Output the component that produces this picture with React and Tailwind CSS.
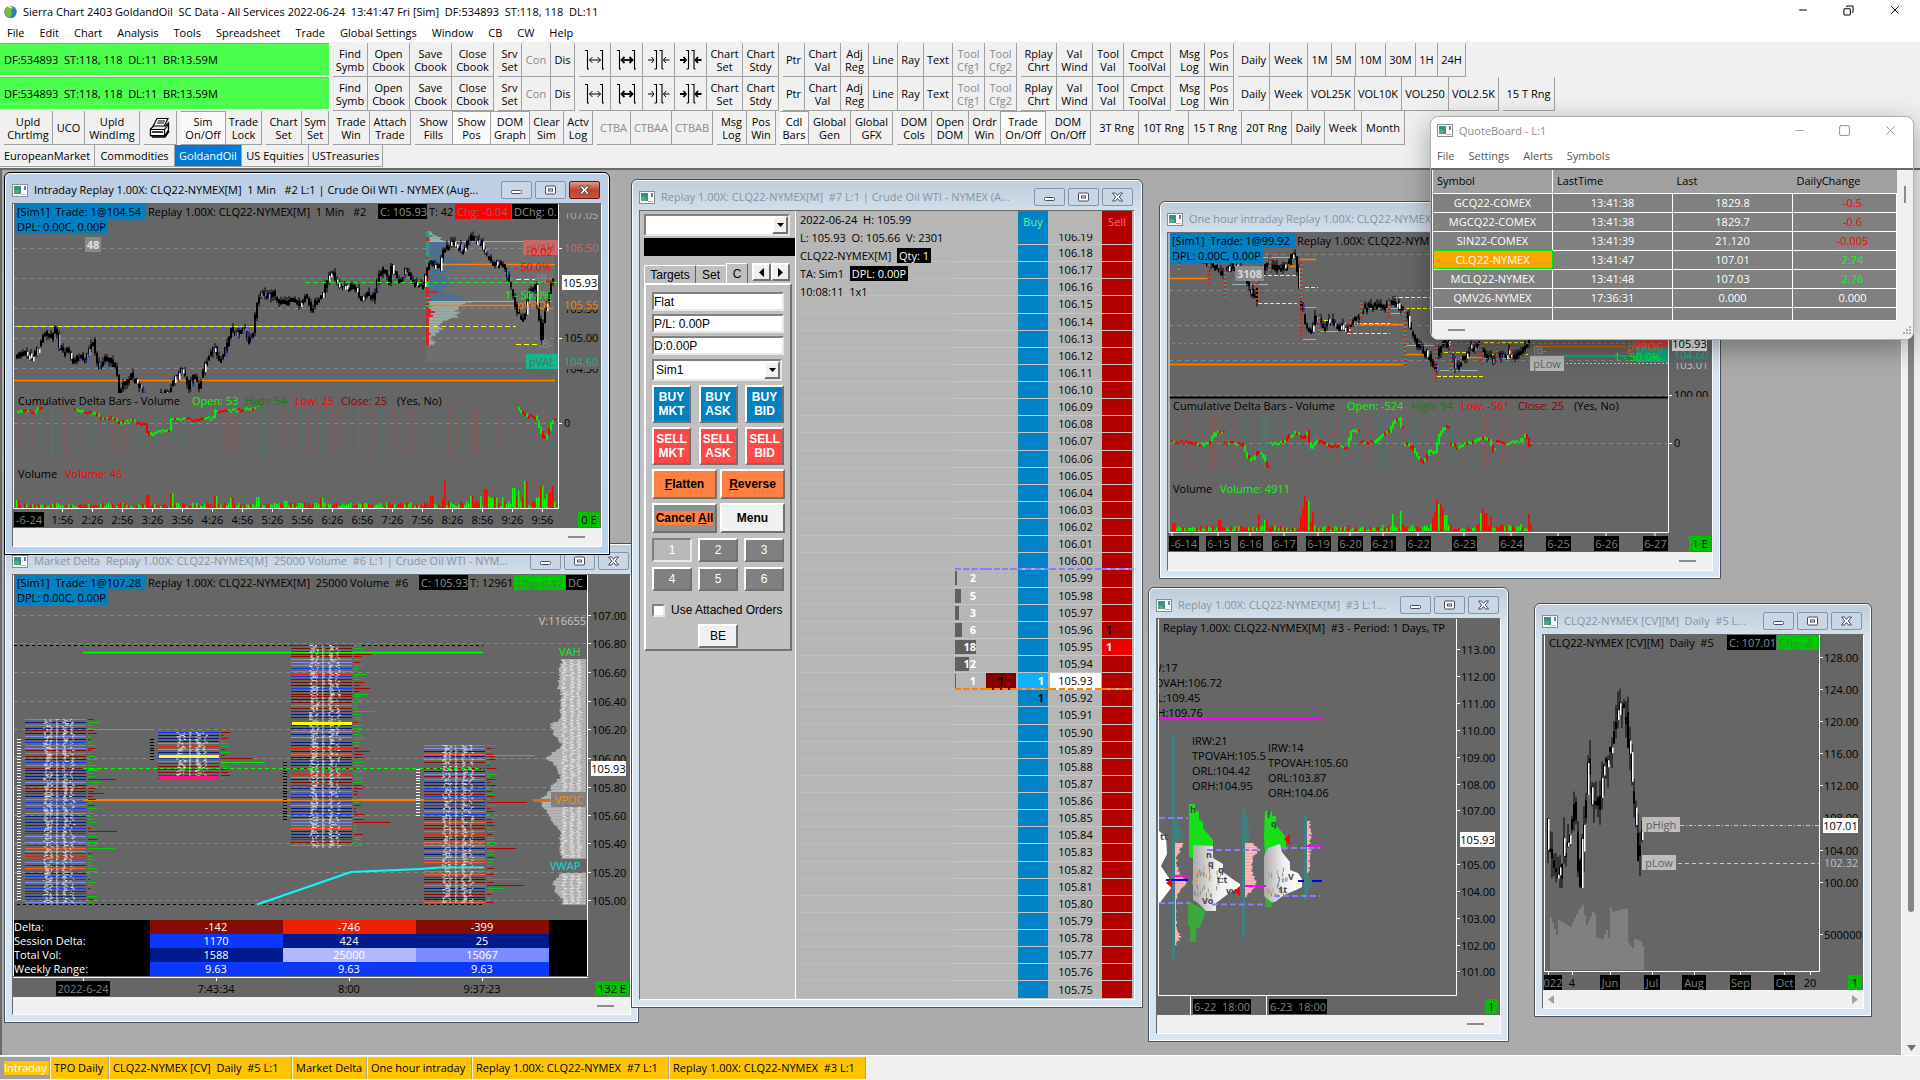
import { Minus, X, Square, Copy } from 'lucide-react';
import clsx from 'clsx';

// ---------- helpers ----------

const makeRandom = (seed) => {
  let s = seed;
  return () => {
    s = (s * 1664525 + 1013904223) % 4294967296;
    return s / 4294967296;
  };
};

const valueAt = (points, x) => {
  for (let i = 1; i < points.length; i++) {
    const [x0, y0] = points[i - 1];
    const [x1, y1] = points[i];
    if (x <= x1) return y0 + ((y1 - y0) * (x - x0)) / (x1 - x0 || 1);
  }
  return points[points.length - 1][1];
};

const range = (from, to, step) => {
  const out = [];
  for (let v = from; v <= to; v += step) out.push(v);
  return out;
};

// ---------- toolbar data: [label, width, state] ----------

const fileGroup = [
  ['Find\nSymb', 'w-[35px]'],
  ['Open\nCbook', 'w-[42px]'],
  ['Save\nCbook', 'w-[42px]'],
  ['Close\nCbook', 'w-[42px]'],
];
const serverGroup = [
  ['Srv\nSet', 'w-[24px]'],
  ['Con', 'w-[29px]', 'off'],
  ['Dis', 'w-[24px]'],
];
const spacingGroup = [
  ['widen', 'w-[32px]', 'icon'],
  ['widenBold', 'w-[32px]', 'icon'],
  ['narrow', 'w-[32px]', 'icon'],
  ['narrowBold', 'w-[32px]', 'icon'],
  ['Chart\nSet', 'w-[36px]'],
  ['Chart\nStdy', 'w-[36px]'],
];
const toolGroup = [
  ['Ptr', 'w-[22px]'],
  ['Chart\nVal', 'w-[36px]'],
  ['Adj\nReg', 'w-[28px]'],
  ['Line', 'w-[29px]'],
  ['Ray', 'w-[26px]'],
  ['Text', 'w-[29px]'],
  ['Tool\nCfg1', 'w-[32px]', 'off'],
  ['Tool\nCfg2', 'w-[32px]', 'off'],
];
const replayGroup = [
  ['Rplay\nChrt', 'w-[36px]'],
  ['Val\nWind', 'w-[36px]'],
  ['Tool\nVal', 'w-[31px]'],
  ['Cmpct\nToolVal', 'w-[47px]'],
];
const logGroup = [
  ['Msg\nLog', 'w-[30px]'],
  ['Pos\nWin', 'w-[29px]'],
];

const common = [fileGroup, serverGroup, spacingGroup, toolGroup, replayGroup, logGroup];

const rowOne = [
  ...common,
  [
    ['Daily', 'w-[32px]'],
    ['Week', 'w-[38px]'],
    ['1M', 'w-[24px]'],
    ['5M', 'w-[24px]'],
    ['10M', 'w-[30px]'],
    ['30M', 'w-[30px]'],
    ['1H', 'w-[22px]'],
    ['24H', 'w-[28px]'],
  ],
];

const rowTwo = [
  ...common,
  [
    ['Daily', 'w-[32px]'],
    ['Week', 'w-[38px]'],
    ['VOL25K', 'w-[47px]'],
    ['VOL10K', 'w-[47px]'],
    ['VOL250', 'w-[47px]'],
    ['VOL2.5K', 'w-[50px]'],
  ],
  [['15 T Rng', 'w-[52px]']],
];

const rowThree = [
  [
    ['Upld\nChrtImg', 'w-[49px]'],
    ['UCO', 'w-[32px]'],
    ['Upld\nWindImg', 'w-[55px]'],
  ],
  [['print', 'w-[33px]', 'icon']],
  [
    ['Sim\nOn/Off', 'w-[45px]', 'on'],
    ['Trade\nLock', 'w-[36px]'],
  ],
  [
    ['Chart\nSet', 'w-[36px]'],
    ['Sym\nSet', 'w-[27px]'],
  ],
  [
    ['Trade\nWin', 'w-[37px]'],
    ['Attach\nTrade', 'w-[41px]'],
  ],
  [
    ['Show\nFills', 'w-[38px]'],
    ['Show\nPos', 'w-[38px]', 'on'],
    ['DOM\nGraph', 'w-[39px]', 'on'],
    ['Clear\nSim', 'w-[34px]'],
    ['Actv\nLog', 'w-[29px]'],
  ],
  [
    ['CTBA', 'w-[34px]', 'off'],
    ['CTBAA', 'w-[41px]', 'off'],
    ['CTBAB', 'w-[41px]', 'off'],
  ],
  [
    ['Msg\nLog', 'w-[30px]'],
    ['Pos\nWin', 'w-[29px]'],
  ],
  [
    ['Cdl\nBars', 'w-[29px]', 'on'],
    ['Global\nGen', 'w-[42px]'],
    ['Global\nGFX', 'w-[42px]'],
  ],
  [
    ['DOM\nCols', 'w-[35px]'],
    ['Open\nDOM', 'w-[37px]'],
    ['Ordr\nWin', 'w-[32px]'],
    ['Trade\nOn/Off', 'w-[45px]', 'on'],
    ['DOM\nOn/Off', 'w-[45px]'],
  ],
  [
    ['3T Rng', 'w-[44px]'],
    ['10T Rng', 'w-[50px]'],
    ['15 T Rng', 'w-[53px]'],
    ['20T Rng', 'w-[50px]'],
    ['Daily', 'w-[33px]'],
    ['Week', 'w-[37px]'],
    ['Month', 'w-[43px]'],
  ],
];

const ToolIcon = ({ name }) => {
  if (name === 'print') {
    return (
      <svg width="22" height="22" viewBox="0 0 22 22" fill="#fff" stroke="#000" strokeWidth="1.2">
        <path d="M8 1.500h11l-4 8H4z" />
        <path d="M9 4h7M8 6h7" />
        <path d="M1.500 12l3-3h12l3-3v7l-4 6h-14z" fill="#e8e8e8" />
        <path d="M1.500 12.500h14v6h-14zM15.500 12.500l4-5" fill="#fff" />
        <path d="M3 15h11M3 20h13l4-6" fill="none" strokeWidth="1.600" />
      </svg>
    );
  }
  const wide = name.startsWith('widen');
  const bold = name.endsWith('Bold');
  const head = bold ? 1.8 : 1;
  return (
    <svg width="22" height="22" viewBox="0 0 22 22" fill="none" stroke="#000" strokeWidth="1.100">
      {wide ? (
        <>
          <path d="M1 1.500h2.500v18.500h1.500M16 1.500h2.500v18.500h1.500" />
          <path d="M5.500 11h11" strokeWidth={head} />
          <path d="M8.500 8L5.500 11l3 3M13.500 8l3 3-3 3" strokeWidth={head} />
        </>
      ) : (
        <>
          <path d="M6 1.500h2.500v18.500M11.500 1.500h2.500v18.500M8.500 20h-2M14 20h1.500" />
          <path d="M0 11h6M21.500 11h-6" strokeWidth={head} />
          <path d="M3.500 8L6 11l-2.500 3M18 8l-2.500 3 2.500 3" strokeWidth={head} />
        </>
      )}
    </svg>
  );
};

const ToolButton = ({ label, width, state }) => (
  <button
    aria-label={label}
    disabled={state === 'off'}
    className={clsx(
      'flex h-[34px] shrink-0 items-center justify-center whitespace-pre border-r border-b border-[#a0a0a0] text-center leading-[13px]',
      width,
      state === 'off' && 'text-[#8a8a8a]',
      state === 'on' ? 'bg-[#fafafa] border-t' : 'bg-[#f0f0f0]'
    )}
  >
    {state === 'icon' ? <ToolIcon name={label} /> : label}
  </button>
);

const Toolbar = ({ groups, children }) => (
  <div className="flex h-[34px] gap-1">
    {children}
    {groups.map((group, i) => (
      <div key={i} className="flex">
        {group.map(([label, width, state]) => (
          <ToolButton key={label} label={label} width={width} state={state} />
        ))}
      </div>
    ))}
  </div>
);

const StatusPanel = () => (
  <div className="flex h-8 w-[329px] shrink-0 items-center whitespace-pre border-t border-[#a0a0a0] bg-[#4dff4d] pl-1">
    DF:534893  ST:118, 118  DL:11  BR:13.59M
  </div>
);

// ---------- window chrome ----------

const WindowIcon = () => (
  <svg width="16" height="13" viewBox="0 0 16 13" className="shrink-0">
    <rect x="0.500" y="0.500" width="15" height="12" fill="#fff" stroke="#8c8c8c" />
    <rect x="2" y="2" width="7" height="8" fill="#3d8c8c" />
    <rect x="2" y="6" width="5" height="4" fill="#58a870" />
    <path d="M13 2v4" stroke="#2a5a9c" strokeWidth="1.500" />
    <path d="M9 10.500h5" stroke="#b8b8b8" />
  </svg>
);

const FrameButton = ({ kind, danger }) => (
  <button
    aria-label={kind}
    className={clsx(
      'flex h-[18px] w-[31px] items-center justify-center rounded-xs border',
      danger ? 'border-[#5c1a10] bg-linear-to-b from-[#e09a8a] via-[#c0402c] to-[#c85a3c]' : 'border-[#8494ac] bg-[#c8d6e6]'
    )}
  >
    <svg width="13" height="11" viewBox="0 0 13 11" fill="#fff" stroke="#4a4a5a">
      {kind === 'minimize' && <rect x="1.500" y="5.500" width="10" height="3" rx="1" />}
      {kind === 'restore' && (
        <>
          <rect x="1.500" y="1" width="10" height="8" rx="1" />
          <rect x="4.500" y="4" width="4" height="2" />
        </>
      )}
      {kind === 'close' && <path d="M1.500 1h3l2 2.500L8.500 1h3L8.300 5l3.200 4h-3L6.500 6.500 4.500 9h-3L4.700 5z" />}
    </svg>
  </button>
);

const ChartWindow = ({ title, place, active, children }) => (
  <section
    className={clsx(
      'absolute flex flex-col rounded-t-md border px-[7px] pb-[7px] shadow-[inset_0_0_0_1px_white]',
      active
        ? 'border-black bg-linear-to-b from-[#bccfe4] via-[#c4d8ee] to-[#b9d1ea]'
        : 'border-[#4a5058] bg-linear-to-b from-[#bfcddb] via-[#d7e4f2] via-[40px] to-[#d7e4f2]',
      place
    )}
  >
    <header className="flex h-[30px] shrink-0 items-center gap-1 pt-2 pr-0.5 pb-1">
      <WindowIcon />
      <h2 className={clsx('min-w-0 flex-1 overflow-hidden pl-0.5 text-ellipsis whitespace-pre', active ? 'text-black' : 'text-[#8a929c]')}>
        {title}
      </h2>
      <div className="flex gap-[3px]">
        <FrameButton kind="minimize" />
        <FrameButton kind="restore" />
        <FrameButton kind="close" danger={active} />
      </div>
    </header>
    <div className="flex min-h-0 flex-1 flex-col overflow-hidden border border-t-[#696969] border-r-white border-b-white border-l-[#696969]">
      {children}
    </div>
  </section>
);

const ChartFooter = ({ arrows }) => (
  <div className={clsx('flex flex-1 items-center bg-[#f0f0f0]', arrows ? 'justify-between px-1' : 'justify-end pr-4')}>
    {arrows ? (
      <>
        <svg width="7" height="9"><path d="M7 0v9L1 4.500z" fill="#a0a0a0" /></svg>
        <svg width="7" height="9"><path d="M0 0v9l6-4.500z" fill="#a0a0a0" /></svg>
      </>
    ) : (
      <div className="h-0.5 w-[17px] bg-[#8c8c8c]" />
    )}
  </div>
);

const Tag = ({ className, children }) => (
  <span className={clsx('h-[15px] shrink-0 whitespace-pre px-0.5 leading-[15px]', className)}>{children}</span>
);

// ---------- chart primitives ----------

// label with a filled box behind it
const BoxLabel = ({ x, y, w, fill = '#000', color = '#808080', bold, children }) => (
  <g>
    <rect x={x} y={y} width={w} height="15" fill={fill} />
    <text x={x + w / 2} y={y + 11.5} textAnchor="middle" fill={color} fontWeight={bold ? 700 : 400}>{children}</text>
  </g>
);

const GridLines = ({ x1, x2, ys }) =>
  ys.map((y) => <path key={y} d={`M${x1} ${y}H${x2}`} stroke="#8a8a8a" strokeDasharray="4 4" />);

const PlotFrame = ({ left, right, top, bottom }) => (
  <path d={`M${left} ${top}V${bottom}H${right}V${top}`} fill="none" stroke="#fff" />
);

const Candles = ({ points, step, seed, noise, body = 2, tints }) => {
  const rnd = makeRandom(seed);
  const bars = range(points[0][0], points[points.length - 1][0], step).map((x) => {
    const open = valueAt(points, x) + (rnd() - 0.5) * noise;
    const close = valueAt(points, x + step) + (rnd() - 0.5) * noise;
    const top = Math.min(open, close);
    const bottom = Math.max(open, close);
    const fill = rnd() < 0.3 ? tints[Math.floor(rnd() * tints.length)] : '#000';
    return { x, top, h: Math.max(bottom - top, 3), fill, hi: top - rnd() * noise, lo: bottom + rnd() * noise };
  });
  return (
    <>
      {bars.map((b) => (
        <g key={b.x} stroke="#000">
          <path d={`M${b.x} ${b.hi}V${b.lo}`} />
          <rect x={b.x - body / 2} y={b.top} width={body} height={b.h} fill="#000" />
        </g>
      ))}
      {bars.filter((b) => b.fill !== '#000').map((b) => (
        <rect key={b.x} x={Math.round(b.x)} y={b.top} width="1.500" height={b.h + 1} fill={b.fill} />
      ))}
    </>
  );
};

const DeltaTrace = ({ segments, seed }) => {
  const rnd = makeRandom(seed);
  return segments.map((seg) =>
    range(seg[0][0], seg[seg.length - 1][0], 2).map((x) => {
      const wobble = (rnd() - 0.5) * 3;
      const a = valueAt(seg, x) + wobble;
      const b = valueAt(seg, x + 2) + wobble;
      const up = b < a ? rnd() < 0.75 : rnd() < 0.3;
      return <rect key={x} x={x} y={Math.min(a, b) - 1} width="2" height={Math.abs(a - b) + 2} fill={up ? '#00f000' : '#f00000'} />;
    })
  );
};

const Stripes = ({ x1, x2, y, h, count, seed }) => {
  const rnd = makeRandom(seed);
  return range(1, count, 1).map((i) => {
    const x = Math.round(x1 + rnd() * (x2 - x1));
    return <rect key={i} x={x} y={y} width="1" height={h} fill={rnd() < 0.5 ? '#8a5858' : '#4c7a6c'} opacity="0.600" />;
  });
};

const VolumeBars = ({ x1, x2, step, base, low, spikes, seed }) => {
  const rnd = makeRandom(seed);
  return range(x1, x2, step).map((x) => {
    let h = 1 + rnd() * valueAt(low, x);
    spikes.forEach(([sx, sh]) => {
      const d = Math.abs(sx - x);
      if (d < step) h = sh;
      else if (d < step * 3) h = Math.max(h, sh * 0.4 * rnd());
    });
    return <rect key={x} x={x} y={base - h} width={step - 0.5} height={h} fill={rnd() < 0.5 ? '#00ff00' : '#ff0000'} />;
  });
};

const Profile = ({ x, points, fill, dir = 1, seed, step = 1.5, jitter = 6 }) => {
  const rnd = makeRandom(seed);
  return range(points[0][0], points[points.length - 1][0], step).map((y) => {
    const w = Math.max(1, valueAt(points, y) - rnd() * jitter);
    return <rect key={y} x={dir > 0 ? x : x - w} y={y} width={w} height={step + 0.2} fill={fill} />;
  });
};

const PriceScale = ({ x, tick, rows }) =>
  rows.map(([label, y]) => (
    <g key={label}>
      <path d={`M${tick} ${y}h3`} stroke="#fff" />
      <text x={x} y={y + 4} fill="#000">{label}</text>
    </g>
  ));

const TINTS = ['#fff', '#fff', '#fff', '#1e78e6', '#b080ff', '#5a20c8'];

// ---------- Intraday #2 ----------

const intradayPath = [
  [17, 357], [25, 353], [35, 356], [41, 347], [47, 332], [53, 337], [58, 327], [61, 347], [65, 353], [70, 350], [75, 362],
  [82, 355], [87, 362], [92, 347], [95, 342], [98, 357], [101, 368], [107, 358], [114, 363], [118, 368], [121, 390],
  [127, 383], [133, 375], [139, 383], [146, 393], [150, 402], [158, 404], [163, 394], [171, 390], [176, 380], [184, 370],
  [191, 387], [196, 373], [201, 388], [206, 367], [212, 353], [216, 347], [222, 362], [229, 343], [233, 328], [239, 333],
  [246, 328], [251, 342], [256, 330], [258, 303], [263, 292], [269, 297], [275, 293], [282, 303], [288, 303], [295, 297],
  [302, 307], [308, 293], [313, 312], [318, 300], [324, 297], [329, 280], [334, 270], [339, 283], [347, 287], [357, 287],
  [364, 300], [369, 293], [376, 298], [380, 278], [386, 268], [391, 282], [393, 267], [402, 283], [408, 268], [414, 282],
  [425, 285], [431, 263], [441, 268], [445, 250], [455, 242], [465, 250], [473, 237], [482, 242], [488, 253], [494, 263],
  [506, 265], [510, 277], [515, 297], [518, 310], [526, 320], [531, 290], [537, 287], [540, 313], [543, 340], [546, 317],
  [551, 293], [554, 280],
];

const intradayProfile = [
  [231, 3], [235, 12], [240, 18], [242, 32], [248, 16], [255, 20], [258, 28], [262, 50], [264, 60], [268, 24], [273, 16],
  [282, 28], [290, 16], [296, 32], [301, 44], [304, 38], [308, 30], [312, 32], [316, 32], [320, 18], [324, 12], [330, 16],
  [336, 6], [342, 8], [345, 4],
];

const intradayDelta = [
  [[17, 413], [25, 411], [35, 412], [41, 408]],
  [[74, 409], [85, 412], [95, 413], [102, 418], [115, 419], [122, 423], [133, 421], [146, 425], [149, 436], [155, 432],
    [170, 431], [172, 420], [185, 419], [200, 420], [214, 418], [216, 411], [230, 411], [245, 410], [258, 408]],
  [[518, 409], [525, 413], [530, 416], [537, 418], [542, 432], [545, 440], [549, 432], [552, 422], [554, 420]],
];

const intradayTimes = ['1:56', '2:26', '2:56', '3:26', '3:56', '4:26', '4:56', '5:26', '5:56', '6:26', '6:56', '7:26', '7:56', '8:26', '8:56', '9:26', '9:56'];

const IntradayChart = () => {
  const rnd = makeRandom(5);
  return (
    <div className="relative bg-[#666666]">
      <svg className="block h-[324px] w-[588px] text-[11px]" viewBox="13 204 588 324">
        <defs>
          <clipPath id="intra-price"><rect x="13" y="204" width="545" height="189" /></clipPath>
          <clipPath id="intra-top"><rect x="560" y="213" width="40" height="20" /></clipPath>
          <clipPath id="intra-mid"><rect x="560" y="310" width="40" height="6" /></clipPath>
          <clipPath id="intra-low"><rect x="560" y="369" width="40" height="10" /></clipPath>
        </defs>
        <rect x="426" y="241" width="128" height="121" fill="#6e6e6e" />
        <GridLines x1="14" x2="558" ys={[248.5, 278.5, 308.5, 338.5, 368.5, 423.5]} />
        <Profile x={429} points={intradayProfile.filter((p) => p[0] <= 242)} fill="#96aaa6" seed={3} />
        <Profile x={429} points={intradayProfile.filter((p) => p[0] >= 242 && p[0] <= 301)} fill="#4f6f90" seed={4} />
        <Profile x={429} points={intradayProfile.filter((p) => p[0] >= 301)} fill="#96aaa6" seed={6} />
        {range(231, 344, 2).map((y) => (
          <rect key={y} x="426" y={y} width={rnd() < 0.7 ? 3 : 3 + rnd() * 10} height="2" fill={rnd() < (y - 215) / 130 ? '#d02828' : '#2a9c84'} />
        ))}
        <path d="M14 326.500H427" stroke="#9ab4c0" />
        <path d="M17 326.500H516M516 279.500H535M516 344.500H537" stroke="#ffff00" strokeDasharray="5 3" />
        <path d="M14 380.500H555M429 264.500H555M429 305.500H516" stroke="#ff8000" strokeWidth="1.300" />
        <path d="M429 241.500H524M429 301.500H516" stroke="#9ab4c0" />
        <g clipPath="url(#intra-price)">
          <Candles points={intradayPath} step={2} seed={11} noise={5} tints={TINTS} body={1} />
        </g>
        <path d="M305 282.500H558" stroke="#00ff00" strokeDasharray="5 3" />
        <path d="M546 281.500h7" stroke="#f00" strokeWidth="2" />
        <BoxLabel x={85} y={237} w={16} fill="#8a8a8a" color="#e0e0e0" bold>48</BoxLabel>
        <BoxLabel x={523} y={240} w={35} fill="#cc6666" color="#855">pVAH</BoxLabel>
        <BoxLabel x={526} y={354} w={32} fill="#10b890" color="#5a6a66">pVAL</BoxLabel>
        <text x="531" y="256" fill="#ff0000">0.02</text>
        <text x="514" y="271" fill="#ff0000">- 50.0%</text>
        <text x="537" y="282" fill="#888">IB+</text>
        <text x="539" y="348" fill="#888">IB-</text>
        <text x="505" y="299" fill="#00ff00">1 - 50.0%</text>
        <text x="517" y="309" fill="#ff8000">pVPOC</text>

        <text x="564" y="219" fill="#b0b0b0" clipPath="url(#intra-top)">107.05</text>
        <path d="M559 248.500h3M559 338.500h3M559 423.500h3" stroke="#fff" />
        <text x="564" y="252" fill="#cc6666">106.50</text>
        <BoxLabel x={562} y={275} w={36} fill="#fff" color="#000">105.93</BoxLabel>
        <text x="564" y="313" fill="#000" clipPath="url(#intra-mid)">105.50</text>
        <text x="564" y="309" fill="#ff8000">105.55</text>
        <text x="564" y="342" fill="#000">105.00</text>
        <text x="564" y="373" fill="#000" clipPath="url(#intra-low)">104.50</text>
        <text x="564" y="366" fill="#10b890">104.60</text>
        <text x="564" y="427" fill="#000">0</text>

        <Stripes x1={18} x2={556} y={408} h={47} count={110} seed={9} />
        <DeltaTrace segments={intradayDelta} seed={21} />
        <text y="405">
          <tspan x="18" fill="#000">Cumulative Delta Bars - Volume</tspan>
          <tspan x="192" fill="#00ff00">Open: 53</tspan>
          <tspan x="245" fill="#108010">High: 54</tspan>
          <tspan x="295" fill="#ff0000">Low: 25</tspan>
          <tspan x="341" fill="#8c0000">Close: 25</tspan>
          <tspan x="397" fill="#000">(Yes, No)</tspan>
        </text>
        <text y="478">
          <tspan x="18" fill="#000">Volume</tspan>
          <tspan x="65" fill="#ff0000">Volume: 46</tspan>
        </text>
        <VolumeBars x1={16} x2={554} step={2} base={508} seed={31}
          low={[[16, 4], [420, 5], [470, 6], [480, 12], [554, 16]]}
          spikes={[[17, 8], [147, 13], [171, 15], [215, 12], [231, 10], [257, 11], [285, 7], [321, 10], [431, 12], [444, 27], [471, 12], [485, 19], [513, 20], [518, 18], [525, 27], [541, 22], [547, 14], [552, 22]]} />
        <PlotFrame left={13.5} right={558.5} top={204} bottom={508.5} />
        {intradayTimes.map((t, i) => (
          <g key={t}>
            <path d={`M${62.5 + i * 30} 509v3`} stroke="#fff" />
            <text x={62.5 + i * 30} y="524" textAnchor="middle" fill="#000">{t}</text>
          </g>
        ))}
        <BoxLabel x={14} y={512} w={30}>-6-24</BoxLabel>
        <BoxLabel x={578} y={512} w={22} fill="#00c000" color="#000">0 E</BoxLabel>
      </svg>
      <div className="absolute top-0 left-0 flex w-[545px] flex-col items-start overflow-hidden pl-0.5">
        <div className="flex">
          <Tag className="w-[131px] bg-[#0080c0]">[Sim1]  Trade: 1@104.54</Tag>
          <Tag className="w-[232px]">Replay 1.00X: CLQ22-NYMEX[M]  1 Min   #2</Tag>
          <Tag className="w-[49px] bg-black text-[#909090]">C: 105.93</Tag>
          <Tag className="w-[28px]">T: 42</Tag>
          <Tag className="mr-px w-[56px] bg-[#ff0000] text-[#8c6464]">Chg: -0.04</Tag>
          <Tag className="w-[46px] bg-black text-[#909090]">DChg: 0.</Tag>
        </div>
        <Tag className="bg-[#0080c0]">DPL: 0.00C, 0.00P</Tag>
      </div>
    </div>
  );
};

// ---------- Market Delta #6 ----------

const HEAT = ['#001a90', '#0a38ff', '#840c00', '#ec2200', '#840c00', '#ff5a30', '#7a8cff', '#001a90'];

const Footprint = ({ x, top, bottom, seed, sideWidth, redBias }) => {
  const rnd = makeRandom(seed);
  const rows = range(top, bottom, 2.86);
  return (
    <g>
      {rows.map((y) => {
        const wide = rnd() < 0.12;
        const side = 2 + rnd() * (wide ? sideWidth : 8);
        return (
          <g key={y}>
            <rect x={x} y={Math.round(y)} width="61" height="1" fill={HEAT[Math.floor(rnd() * HEAT.length)]} />
            <rect x={x + 63} y={Math.round(y)} width={side} height="1" fill={rnd() < redBias ? '#b00000' : '#00d000'} />
          </g>
        );
      })}
      {range(top, bottom - 1, 1.4).map((y) => (
        <g key={y} fill="#d8d8d8">
          <rect x={x + 18 + rnd() * 4} y={y} width={1 + rnd() * 4} height="1" />
          <rect x={x + 24 + rnd() * 2} y={y} width={rnd() * 3} height="1" />
          <rect x={x + 31} y={y} width={1 + rnd() * 2} height="1" opacity="0.800" />
          <rect x={x + 37 + rnd() * 3} y={y} width={1 + rnd() * 4} height="1" />
          <rect x={x + 44 + rnd() * 4} y={y} width={rnd() * 3} height="1" />
        </g>
      ))}
    </g>
  );
};

const LeftTicks = ({ x, top, bottom, color }) =>
  range(top, bottom, 2.86).map((y) => <rect key={y} x={x} y={Math.round(y)} width="4" height="1" fill={color} />);

const deltaRows = [
  ['Delta:', ['-142', 'bg-[#840c00]'], ['-746', 'bg-[#ec2200]'], ['-399', 'bg-[#840c00]']],
  ['Session Delta:', ['1170', 'bg-[#0a38ff]'], ['424', 'bg-[#001a90]'], ['25', 'bg-[#001a90]']],
  ['Total Vol:', ['1588', 'bg-[#001a90]'], ['25000', 'bg-[#b0b8ff]'], ['15067', 'bg-[#7a8cff]']],
  ['Weekly Range:', ['9.63', 'bg-[#0a38ff]'], ['9.63', 'bg-[#0a38ff]'], ['9.63', 'bg-[#0a38ff]']],
];

const profileSix = [
  [659, 26], [685, 30], [695, 26], [720, 28], [723, 38], [735, 32], [745, 26], [757, 41], [762, 35], [775, 26], [785, 35],
  [791, 38], [795, 43], [800, 48], [810, 42], [818, 36], [830, 28], [857, 26],
];

const MarketDeltaChart = () => {
  const rnd = makeRandom(77);
  return (
    <div className="relative bg-[#666666]">
      <svg className="block h-[345px] w-[617px] text-[11px]" viewBox="13 575 617 345">
        <GridLines x1="14" x2="587" ys={[615.5, 643.5, 672.5, 701.5, 729.5, 758.5, 787.5, 815.5, 843.5, 872.5, 900.5]} />
        <path d="M14 645.500H483M17 904.500H483" stroke="#000" strokeDasharray="3 3" />
        <path d="M83 652.500H483" stroke="#00ff00" strokeWidth="1.300" />
        <path d="M83 800H424" stroke="#ff8000" strokeWidth="2" />
        <Footprint x={25} top={719} bottom={904} seed={13} sideWidth={30} redBias={0.2} />
        <Footprint x={158} top={732} bottom={778} seed={18} sideWidth={30} redBias={0.5} />
        <Footprint x={291} top={645} bottom={848} seed={23} sideWidth={20} redBias={0.35} />
        <Footprint x={424} top={745} bottom={904} seed={29} sideWidth={36} redBias={0.55} />
        <path d="M291 800h61M424 800h60" stroke="#ff8000" />
        <rect x="88" y="729" width="61" height="1" fill="#00f000" />
        <rect x="221" y="762" width="44" height="1" fill="#00f000" />
        <rect x="487" y="755" width="48" height="1" fill="#00f000" />
        <rect x="354" y="822" width="36" height="1" fill="#c00000" />
        <rect x="487" y="802" width="40" height="1" fill="#c00000" />
        <LeftTicks x={17} top={739} bottom={902} color="#fff" />
        <LeftTicks x={150} top={739} bottom={760} color="#000" />
        <LeftTicks x={283} top={762} bottom={820} color="#000" />
        <LeftTicks x={416} top={769} bottom={817} color="#fff" />
        <rect x="159" y="755" width="60" height="3" fill="#ffff00" />
        <rect x="159" y="776" width="60" height="3" fill="#ff1080" />
        <rect x="292" y="722" width="60" height="3" fill="#ffff00" />
        <path d="M83 768.500H483" stroke="#00ff00" strokeDasharray="4 3" />
        <path d="M257 904.500L351 872L420 869L440 867.500H484" fill="none" stroke="#00ffff" strokeWidth="2" />
        <Profile x={586} dir={-1} points={profileSix} fill="#b4b4b4" seed={41} jitter={3} />
        <Profile x={586} dir={-1} points={[[873, 26], [882, 34], [892, 33], [896, 26], [904, 26]]} fill="#b4b4b4" seed={42} jitter={3} />
        {range(660, 903, 1.5).filter((y) => y < 857 || y > 873).map((y) => (
          <g key={y} fill="#e8e8e8">
            <rect x={561 + rnd() * 3} y={y} width={2 + rnd() * 3} height="0.800" />
            <rect x={569 + rnd() * 2} y={y} width={2 + rnd() * 3} height="0.800" />
            <rect x={576 + rnd() * 2} y={y} width={2 + rnd() * 3} height="0.800" />
          </g>
        ))}
        <rect x="533" y="799" width="18" height="3" fill="#d07020" />
        <BoxLabel x={551} y={792} w={36} fill="#808080" color="#ff8818">VPOC</BoxLabel>
        <text x="559" y="656" fill="#00ff00">VAH</text>
        <text x="550" y="870" fill="#00e0e0">VWAP</text>
        <text x="586" y="625" textAnchor="end" fill="#c8c8c8">V:116655</text>
        <PlotFrame left={13.5} right={587.5} top={575} bottom={930} />
        <PriceScale x={592} tick={588} rows={[['107.00', 615.5], ['106.80', 643.5], ['106.60', 672.5], ['106.40', 701.5], ['106.20', 729.5], ['106.00', 758.5], ['105.80', 787.5], ['105.60', 815.5], ['105.40', 843.5], ['105.20', 872.5], ['105.00', 900.5]]} />
        <BoxLabel x={591} y={761} w={35} fill="#fff" color="#000">105.93</BoxLabel>
      </svg>
      <table className="w-[575px] table-fixed border-collapse border-x border-white bg-black text-white">
        <tbody>
          {deltaRows.map(([name, ...cells]) => (
            <tr key={name} className="h-[14px] leading-[14px]">
              <th className="w-[136px] p-0 text-left font-normal">{name}</th>
              {cells.map(([value, bg], i) => (
                <td key={i} className={clsx('w-[133px] p-0 text-center', bg)}>{value}</td>
              ))}
              <td className="p-0" />
            </tr>
          ))}
        </tbody>
      </table>
      <svg className="block h-[21px] w-[617px] text-[11px]" viewBox="13 976 617 21">
        <path d="M13 977.500H588M83.500 978v3M216.500 978v3M349.500 978v3M482.500 978v3" stroke="#fff" />
        <BoxLabel x={56} y={981} w={54}>2022-6-24</BoxLabel>
        <g fill="#000" textAnchor="middle">
          <text x="216" y="993">7:43:34</text>
          <text x="349" y="993">8:00</text>
          <text x="482" y="993">9:37:23</text>
        </g>
        <BoxLabel x={595} y={981} w={34} fill="#00c000" color="#000">132 E</BoxLabel>
      </svg>
      <div className="absolute top-0 left-0 flex w-[574px] flex-col items-start overflow-hidden pl-0.5">
        <div className="flex">
          <Tag className="w-[131px] bg-[#0080c0]">[Sim1]  Trade: 1@107.28</Tag>
          <Tag className="w-[273px]">Replay 1.00X: CLQ22-NYMEX[M]  25000 Volume  #6</Tag>
          <Tag className="w-[49px] bg-black text-[#909090]">C: 105.93</Tag>
          <Tag className="w-[46px]">T: 12961</Tag>
          <Tag className="mr-px w-[51px] bg-[#00c800] text-[#3c863c]">Chg: 0.37</Tag>
          <Tag className="w-[22px] bg-black text-[#909090]">DC</Tag>
        </div>
        <Tag className="bg-[#0080c0]">DPL: 0.00C, 0.00P</Tag>
      </div>
    </div>
  );
};

// ---------- Trading DOM #7 ----------

const sunken = 'border-2 border-t-[#808080] border-l-[#808080] border-r-[#e8e8e8] border-b-[#e8e8e8]';
const raised = 'border-2 border-t-white border-l-white border-r-[#707070] border-b-[#707070]';

const OldSelect = ({ label, value, className }) => (
  <div className={clsx('relative bg-white', sunken, className)}>
    <select aria-label={label} className="block h-full w-full appearance-none bg-white pl-0.5 outline-none">
      <option>{value}</option>
    </select>
    <div className={clsx('pointer-events-none absolute top-0 right-0 flex h-full w-4 items-center justify-center bg-[#f0f0f0]', raised)}>
      <svg width="7" height="4"><path d="M0 0h7L3.500 4z" /></svg>
    </div>
  </div>
);

const TradePanel = () => (
  <aside className="w-[156px] shrink-0 border-r border-white bg-[#c0c0c0] pt-[3px] pl-1 font-['Liberation_Sans',sans-serif] text-[12px]">
    <OldSelect label="Symbol" value="" className="h-[22px] w-[146px]" />
    <div className="mt-0.5 h-[18px] bg-black" />
    <div className="mt-[7px] flex h-5 items-end">
      <button className="h-[18px] w-[52px] rounded-t-xs border-t border-r border-l border-t-white border-r-[#606060] border-l-white">Targets</button>
      <button className="h-[18px] w-[30px] border-t border-white">Set</button>
      <button className="h-5 w-[22px] border border-t-white border-r-[#606060] border-b-0 border-l-white">C</button>
      <div className="ml-1 flex self-start">
        <button aria-label="Previous tab" className={clsx('flex h-[18px] w-[19px] items-center justify-center bg-[#f0f0f0]', raised)}>
          <svg width="5" height="9"><path d="M5 0v9L0 4.500z" /></svg>
        </button>
        <button aria-label="Next tab" className={clsx('flex h-[18px] w-[19px] items-center justify-center bg-[#f0f0f0]', raised)}>
          <svg width="5" height="9"><path d="M0 0v9l5-4.500z" /></svg>
        </button>
      </div>
    </div>
    <div className={clsx('flex h-[368px] w-[148px] flex-col px-1.5 pt-[7px]', raised)}>
      <div className="flex flex-col gap-[3px]">
        {['Flat', 'P/L: 0.00P', 'D:0.00P'].map((v) => (
          <input key={v} aria-label={v} readOnly value={v} className={clsx('h-[19px] w-[132px] bg-white', sunken)} />
        ))}
        <OldSelect label="Trade account" value="Sim1" className="mt-px h-[22px] w-[130px]" />
      </div>
      {[['BUY', 'bg-[#0080c0]'], ['SELL', 'bg-[#ff4848]']].map(([side, bg]) => (
        <div key={side} className="mt-1 flex w-[132px] justify-between">
          {['MKT', 'ASK', 'BID'].map((kind) => (
            <button key={kind} className={clsx('h-[38px] w-[39px] leading-[14px] font-bold text-white', raised, bg)}>
              {side}<br />{kind}
            </button>
          ))}
        </div>
      ))}
      <div className="mt-1 grid w-[133px] grid-cols-2 gap-x-[3px] gap-y-1 font-bold">
        <button className={clsx('h-[30px] bg-[#ff8040]', raised)}><u>F</u>latten</button>
        <button className={clsx('h-[30px] bg-[#ff8040]', raised)}><u>R</u>everse</button>
        <button className={clsx('h-[30px] whitespace-nowrap bg-[#909090]', raised)}><span className="bg-[#ff8040]">Cancel <u>A</u>ll</span></button>
        <button className={clsx('h-[30px] bg-[#f0f0f0]', raised)}>Menu</button>
      </div>
      <div className="mt-[5px] grid w-[132px] grid-cols-3 gap-x-1.5 gap-y-[5px]">
        {['1', '2', '3', '4', '5', '6'].map((n) => (
          <button key={n} className={clsx('h-6 text-white', n === '1' ? 'bg-[#b8b8b8]' : 'bg-[#808080]', n === '1' ? sunken : raised)}>{n}</button>
        ))}
      </div>
      <label className="mt-[11px] flex items-center gap-1.5 whitespace-nowrap">
        <input type="checkbox" className={clsx('h-[13px] w-[13px] appearance-none bg-white', sunken)} />
        Use Attached Orders
      </label>
      <button className={clsx('mt-1.5 ml-[46px] h-6 w-10 shrink-0 bg-[#f0f0f0]', raised)}>BE</button>
    </div>
  </aside>
);

const ladderPrices = range(0, 43, 1).map((i) => (106.18 - i * 0.01).toFixed(2));
const bidVolume = { '105.99': 2, '105.98': 5, '105.97': 3, '105.96': 6, '105.95': 18, '105.94': 12, '105.93': 1 };

const LadderRow = ({ price }) => {
  const volume = bidVolume[price];
  const last = price === '105.93';
  const line = clsx(
    price === '106.00' && 'border-b-2 border-b-[#8080ff] [border-bottom-style:dashed]',
    last && 'border-b-2 border-b-[#ff8000] [border-bottom-style:dashed]',
    price !== '106.00' && !last && 'border-b border-b-[#c6c6c6]'
  );
  return (
    <tr className="h-[17px] leading-[14px]">
      <td className="border-b border-b-[#c0c0c0] p-0" />
      <td className={clsx('p-0', line)}>
        {volume && (
          <div className="relative h-[14px]">
            <div className="h-full bg-[#606060]" style={{ width: Math.max(1, Math.round(volume * 1.17)) }} />
            <b className="absolute top-0 right-2.5 text-white">{volume}</b>
          </div>
        )}
      </td>
      <td className={clsx('p-0 text-center font-bold', line, last && 'bg-[#800000]')}>{last && '1'}</td>
      <td className={clsx('border-x-2 border-x-[#b6b6b6] bg-clip-padding p-0 pr-1 text-right font-bold', line, last ? 'bg-[#10b0ff] text-white' : 'bg-[#0082c6]')}>
        {(last || price === '105.92') && '1'}
      </td>
      <td className={clsx('p-0 text-center', line, last && 'bg-white')}>{price}</td>
      <td className={clsx('border-r-2 border-l border-x-[#b6b6b6] bg-clip-padding p-0 pl-1 font-bold', line, price === '105.95' ? 'bg-[#ec0000] text-white' : 'bg-[#b20000]')}>
        {(price === '105.96' || price === '105.95') && '1'}
      </td>
    </tr>
  );
};

const DomChart = () => (
  <div className="flex min-h-0 flex-1">
    <TradePanel />
    <div className="relative min-w-0 flex-1 bg-[#b6b6b6]">
      <table className="h-full w-full table-fixed border-separate border-spacing-0">
        <colgroup>
          <col />
          <col className="w-[31px]" />
          <col className="w-[30px]" />
          <col className="w-[34px]" />
          <col className="w-[51px]" />
          <col className="w-[33px]" />
        </colgroup>
        <thead>
          <tr className="h-[34px]">
            <th colSpan="3" className="p-0" />
            <th className="border-x-2 border-b border-x-[#b6b6b6] border-b-[#c6c6c6] bg-[#0082c6] bg-clip-padding p-0 pb-3 font-normal text-[#50ff90]">Buy</th>
            <th className="border-b border-[#c6c6c6] p-0 align-bottom font-normal">
              <div className="flex h-2.5 items-end justify-center overflow-hidden leading-[14px]">106.19</div>
            </th>
            <th className="border-r-2 border-b border-l border-x-[#b6b6b6] border-b-[#c6c6c6] bg-[#b20000] bg-clip-padding p-0 pb-3 font-normal text-[#ff7070]">Sell</th>
          </tr>
        </thead>
        <tbody>
          {ladderPrices.map((price) => <LadderRow key={price} price={price} />)}
        </tbody>
      </table>
      <div className="absolute top-0 left-1 leading-[18px] whitespace-pre">
        <p>2022-06-24  H: 105.99</p>
        <p>L: 105.93  O: 105.66  V: 2301</p>
        <p>CLQ22-NYMEX[M]  <span className="bg-black px-0.5 text-white">Qty: 1</span></p>
        <p>TA: Sim1  <span className="bg-black px-0.5 text-white">DPL: 0.00P</span></p>
        <p>10:08:11  1x1</p>
      </div>
    </div>
  </div>
);

// ---------- One hour ----------

const hourPath = [
  [1203, 258], [1210, 262], [1216, 265], [1223, 275], [1226, 271], [1233, 266], [1240, 268], [1246, 273], [1250, 285],
  [1253, 292], [1257, 300], [1260, 275], [1268, 263], [1275, 268], [1283, 268], [1290, 265], [1294, 253], [1297, 258],
  [1300, 275], [1303, 305], [1307, 322], [1312, 333], [1318, 315], [1325, 327], [1333, 320], [1340, 328], [1350, 327],
  [1358, 318], [1366, 308], [1372, 305], [1380, 307], [1388, 305], [1393, 300], [1400, 305], [1408, 315], [1413, 330],
  [1418, 345], [1425, 352], [1430, 355], [1437, 370], [1440, 352], [1446, 338], [1452, 350], [1458, 368], [1465, 358],
  [1472, 348], [1480, 343], [1488, 355], [1495, 358], [1503, 355], [1510, 352], [1518, 358], [1525, 347], [1530, 340],
];

const hourDelta = [
  [[1171, 442], [1185, 442], [1195, 443], [1203, 445], [1210, 443], [1216, 432], [1223, 432]],
  [[1224, 443], [1243, 444], [1248, 456], [1253, 460], [1258, 453], [1263, 455], [1268, 466]],
  [[1270, 444], [1285, 442], [1290, 436], [1297, 433], [1303, 438], [1308, 432], [1311, 448], [1318, 441], [1330, 446], [1348, 447], [1352, 432], [1358, 430]],
  [[1360, 442], [1375, 443], [1382, 435], [1390, 432], [1395, 420], [1400, 418], [1402, 427]],
  [[1404, 443], [1412, 447], [1418, 457], [1425, 462], [1430, 450], [1436, 453], [1440, 435], [1445, 427], [1449, 429]],
  [[1450, 443], [1457, 448], [1465, 444], [1472, 442], [1481, 437], [1490, 440], [1494, 450]],
  [[1496, 442], [1510, 443], [1520, 442], [1527, 434], [1530, 446]],
];

const hourDates = [['-6-14', 1184], ['6-15', 1218], ['6-16', 1250], ['6-17', 1284], ['6-19', 1318], ['6-20', 1350], ['6-21', 1383], ['6-22', 1418], ['6-23', 1464], ['6-24', 1511], ['6-25', 1558], ['6-26', 1606], ['6-27', 1655]];

const OneHourChart = () => (
  <div className="relative bg-[#666666]">
    <svg className="block h-[319px] w-[544px] text-[11px]" viewBox="1168 233 544 319">
      <defs>
        <clipPath id="hour-100"><rect x="1670" y="385" width="40" height="12" /></clipPath>
        <clipPath id="hour-103"><rect x="1670" y="363" width="40" height="12" /></clipPath>
      </defs>
      <GridLines x1="1169" x2="1668" ys={[254.5, 290.5, 325.5, 360.5, 395.5, 443.5]} />
      <path d="M1170 278.500H1210M1170 364.500H1406M1357 324.500H1406M1290 266.500H1297M1300 259.500H1316M1405 354.500H1430M1460 357.500H1482" stroke="#ff8000" strokeWidth="1.300" />
      <path d="M1232 284.500H1268M1305 307.500H1316M1300 339.500H1316M1320 331.500H1345M1390 313.500H1405M1405 345.500H1437M1440 370.500H1478M1484 358.500H1512M1262 257.500H1290M1366 308.500H1400" stroke="#9ab4c0" />
      <path d="M1262 275.500H1297M1258 303.500H1297M1305 287.500H1318M1318 320.500H1330M1345 323.500H1390M1347 333.500H1390M1393 297.500H1440M1405 308.500H1440M1437 376.500H1483M1444 352.500H1468M1484 342.500H1528M1490 354.500H1528" stroke="#ffff00" strokeDasharray="4 2" />
      <Candles points={hourPath} step={2} seed={51} noise={6} tints={TINTS} body={1} />
      {[[1179, 262, 270], [1209, 250, 286], [1225, 270, 297], [1257, 270, 303], [1270, 255, 272], [1301, 262, 340], [1319, 315, 335], [1350, 315, 333], [1361, 300, 318], [1389, 300, 318], [1405, 308, 367], [1436, 345, 382], [1451, 345, 374], [1481, 343, 364], [1497, 340, 362], [1512, 345, 358]].map(([x, a, b], i) => (
        <g key={x}>
          <path d={`M${x} ${a}V${b}`} stroke="#d02828" strokeWidth="3" strokeDasharray="2 2" />
          <path d={`M${x} ${a + 2}V${i % 2 ? (a + b) / 2 : b}`} stroke="#2a9c84" strokeWidth="3" strokeDasharray="2 2" />
        </g>
      ))}
      <path d="M1172 343.500H1668" stroke="#00e000" strokeDasharray="3 3" />
      <path d="M1534 346.500H1626" stroke="#ff8000" strokeDasharray="1 1" />
      <rect x="1531" y="355" width="137" height="2" fill="#10a888" />
      <path d="M1566 363.500H1668" stroke="#c8c8c8" strokeDasharray="2 2" />
      <rect x="1633" y="340" width="35" height="7" fill="#d04040" />
      <rect x="1636" y="347" width="32" height="15" fill="#10a888" />
      <text x="1533" y="354" fill="#999">IB-</text>
      <text x="1627" y="351" fill="#e07030">pVPOC</text>
      <text x="1614" y="361" fill="#00ff00">1 - 50.0%</text>
      <BoxLabel x={1530} y={356} w={34} fill="#b8b8b8" color="#606060">pLow</BoxLabel>
      <BoxLabel x={1235} y={266} w={29} fill="#8a8a8a" color="#d8d8d8" bold>3108</BoxLabel>

      <BoxLabel x={1672} y={336} w={35} fill="#e8e8e8" color="#000">105.93</BoxLabel>
      <text x="1674" y="359" fill="#10b890">104.60</text>
      <text x="1674" y="369" fill="#c8c8c8" clipPath="url(#hour-103)">103.01</text>
      <text x="1674" y="399" fill="#000" clipPath="url(#hour-100)">100.00</text>
      <text x="1674" y="447" fill="#000">0</text>
      <path d="M1169 397.500H1668" stroke="#000" strokeWidth="2" />
      <path d="M1669 395.500h3M1669 443.500h3" stroke="#fff" />

      <Stripes x1={1172} x2={1530} y={413} h={57} count={44} seed={61} />
      <rect x="1260" y="413" width="8" height="57" fill="#4c7a6c" opacity="0.500" />
      <rect x="1210" y="413" width="7" height="57" fill="#8a5858" opacity="0.500" />
      <rect x="1484" y="413" width="4" height="57" fill="#8a5858" opacity="0.500" />
      <DeltaTrace segments={hourDelta} seed={71} />
      <text y="410">
        <tspan x="1173" fill="#000">Cumulative Delta Bars - Volume</tspan>
        <tspan x="1347" fill="#00ff00">Open: -524</tspan>
        <tspan x="1411" fill="#108010">High: 94</tspan>
        <tspan x="1461" fill="#ff0000">Low: -561</tspan>
        <tspan x="1518" fill="#8c0000">Close: 25</tspan>
        <tspan x="1574" fill="#000">(Yes, No)</tspan>
      </text>
      <text y="493">
        <tspan x="1173" fill="#000">Volume</tspan>
        <tspan x="1220" fill="#00ff00">Volume: 4911</tspan>
      </text>
      <VolumeBars x1={1172} x2={1530} step={2} base={531} seed={81} low={[[1172, 4], [1530, 6]]}
        spikes={[[1173, 8], [1219, 11], [1258, 17], [1265, 11], [1302, 24], [1304, 35], [1307, 30], [1312, 19], [1392, 17], [1400, 20], [1434, 20], [1436, 32], [1439, 27], [1442, 22], [1445, 16], [1480, 18], [1482, 22], [1485, 18], [1490, 14], [1528, 17]]} />
      <PlotFrame left={1169} right={1668.5} top={233} bottom={532.5} />
      {hourDates.map(([d, x], i) => (
        <g key={d}>
          <path d={`M${x + (i ? 0 : -12)} 533v3`} stroke="#fff" />
          <BoxLabel x={x - (i ? 12 : 15)} y={536} w={i ? 25 : 30}>{d}</BoxLabel>
        </g>
      ))}
      <BoxLabel x={1689} y={536} w={22} fill="#00c000" color="#000">1 E</BoxLabel>
    </svg>
    <div className="absolute top-0 left-0 flex w-[500px] flex-col items-start overflow-hidden pl-0.5">
      <div className="flex">
        <Tag className="w-[125px] bg-[#0080c0]">[Sim1]  Trade: 1@99.92</Tag>
        <Tag>Replay 1.00X: CLQ22-NYMEX[M]  60 Min  #4</Tag>
      </div>
      <Tag className="bg-[#0080c0]">DPL: 0.00C, 0.00P</Tag>
    </div>
  </div>
);

// ---------- TPO #3 ----------

const tpoNotes = [
  [1142, 672, ['IRW:17', 'TPOVAH:106.72', 'ORL:109.45', 'ORH:109.76']],
  [1192, 745, ['IRW:21', 'TPOVAH:105.5', 'ORL:104.42', 'ORH:104.95']],
  [1268, 752, ['IRW:14', 'TPOVAH:105.60', 'ORL:103.87', 'ORH:104.06']],
];

const TpoShape = ({ upper, value, lower }) => (
  <g>
    <path d={upper} fill="#18e018" />
    {lower && <path d={lower} fill="#3aa83a" />}
    <path d={value} fill="url(#tpo-fade)" />
  </g>
);

const TpoChart = () => {
  const rnd = makeRandom(303);
  return (
    <div className="bg-[#666666]">
      <svg className="block h-[396px] w-[343px] text-[11px]" viewBox="1157 619 343 396">
        <defs>
          <linearGradient id="tpo-fade"><stop stopColor="#aaa" /><stop offset="0.500" stopColor="#eee" /><stop offset="1" stopColor="#fff" /></linearGradient>
          <clipPath id="tpo-plot"><rect x="1159" y="619" width="297" height="377" /></clipPath>
        </defs>
        <g clipPath="url(#tpo-plot)" fill="#000">
          <text x="1163" y="632" className="whitespace-pre">Replay 1.00X: CLQ22-NYMEX[M]  #3 - Period: 1 Days, TP</text>
          {tpoNotes.map(([x, y, lines]) => (
            <text key={x} y={y}>
              {lines.map((line, i) => <tspan key={line} x={x} y={y + i * 15}>{line}</tspan>)}
            </text>
          ))}
        </g>
        <path d="M1159 718H1321" stroke="#ff00ff" strokeWidth="2" />
        <rect x="1172" y="736" width="3" height="222" fill="#408080" />
        <Profile x={1175} points={[[815, 2], [825, 5], [836, 9], [842, 3]]} fill="#408080" seed={1} jitter={3} />
        <Profile x={1175} points={[[843, 9], [850, 6], [856, 3], [866, 3], [875, 8], [882, 12], [890, 6], [900, 2], [925, 2], [935, 7], [944, 2]]} fill="#ffb6b6" seed={2} jitter={3} />
        <rect x="1242" y="809" width="3" height="128" fill="#408080" />
        <Profile x={1245} points={[[815, 5], [825, 4], [835, 7], [842, 3]]} fill="#408080" seed={3} jitter={3} />
        <Profile x={1245} points={[[843, 9], [848, 16], [855, 10], [870, 8], [885, 13], [890, 8], [896, 2]]} fill="#ffb6b6" seed={4} jitter={3} />
        <rect x="1304" y="815" width="3" height="86" fill="#408080" />
        <Profile x={1307} points={[[821, 4], [830, 5], [845, 4], [855, 5], [872, 3]]} fill="#ffb6b6" seed={5} jitter={3} />
        <Profile x={1307} points={[[873, 3], [883, 7], [892, 2]]} fill="#408080" seed={6} jitter={3} />

        <path d="M1159 831l7 6 1 17-6 12 8 12 2 10-6 8-6 8z" fill="#fff" />
        <TpoShape
          upper="M1189 804h6v6l4 2v8l4 2v6l5 6 5 6v14l-24 4z"
          value="M1193 845l20 1v12l10 6v8l8 6 9 6v5l-8 2-8 6-8 6v8h-10l-8-8-5-3v-48z"
          lower="M1188 901l17 9-1 8-4 9-4 2v13h-6v-16h-2z" />
        <TpoShape
          upper="M1265 811h7v5h4v9l10 12v14l-9-5-12 10-1-20z"
          value="M1268 848l12-4 2 8 8 10v8l8 3 4 6v8l-6 3-12 5-9 7h-4l-7-6v-40z"
          lower="M1265 893l9 8-2 6h-7z" />
        {range(0, 60, 1).map((i) => {
          const right = i > 34;
          const x = (right ? 1267 : 1192) + rnd() * (right ? 20 : 30);
          const y = 866 + rnd() * 28;
          return <path key={i} d={`M${x} ${y}v4`} stroke={['#c89858', '#7a90a8', '#888'][i % 3]} />;
        })}
        <g fill="#444" className="text-[9px] font-bold">
          <text x="1190" y="813">h</text>
          <text x="1206" y="858">n</text>
          <text x="1208" y="867">q</text>
          <text x="1218" y="873">q</text>
          <text x="1217" y="883">t:t</text>
          <text x="1226" y="894">vv</text>
          <text x="1202" y="904">Vo</text>
          <text x="1267" y="818">f</text>
          <text x="1271" y="827">q</text>
          <text x="1288" y="880">V</text>
          <text x="1278" y="893">1t</text>
          <text x="1160" y="840">tt</text>
        </g>
        <path d="M1159 818H1188M1207 850H1261M1159 903H1190M1212 904.500H1265M1282 848H1320M1274 896H1320" stroke="#8080ff" strokeWidth="2" strokeDasharray="6 3" />
        <path d="M1174 876h16M1245 886h21M1305 846h16" stroke="#ff00ff" strokeWidth="2" />
        <path d="M1166 880h22M1298 881h6M1312 881h10" stroke="#0000ff" strokeWidth="2" />
        <path d="M1284 839l6-5v11zM1234 891l6-5v10zM1166 883l6-5v10z" fill="#ff0000" />
        <PlotFrame left={1158.5} right={1456.5} top={619} bottom={995.5} />
        <PriceScale x={1461} tick={1457} rows={[['113.00', 649.5], ['112.00', 676.5], ['111.00', 703.5], ['110.00', 730.5], ['109.00', 757.5], ['108.00', 784.5], ['107.00', 810.5], ['105.00', 864.5], ['104.00', 891.5], ['103.00', 918.5], ['102.00', 945.5], ['101.00', 971.5]]} />
        <BoxLabel x={1460} y={832} w={35} fill="#fff" color="#000">105.93</BoxLabel>
        <path d="M1190.500 996v19M1266.500 996v19" stroke="#fff" />
        <BoxLabel x={1193} y={999} w={58}>6-22&nbsp; 18:00</BoxLabel>
        <BoxLabel x={1269} y={999} w={58}>6-23&nbsp; 18:00</BoxLabel>
        <BoxLabel x={1485} y={999} w={13} fill="#00c000" color="#000">1</BoxLabel>
      </svg>
    </div>
  );
};

// ---------- Daily #5 ----------

const dailyPath = [
  [1548, 824], [1551, 860], [1555, 857], [1559, 880], [1562, 873], [1565, 847], [1570, 853], [1573, 820], [1577, 803],
  [1579, 853], [1582, 883], [1585, 833], [1588, 797], [1590, 767], [1593, 793], [1597, 807], [1602, 800], [1606, 767],
  [1610, 760], [1615, 733], [1620, 713], [1623, 703], [1628, 720], [1632, 753], [1635, 800], [1638, 833], [1641, 857],
  [1643, 837],
];

const dailyVolume = [
  [1550, 917], [1556, 935], [1558, 920], [1570, 927], [1578, 910], [1582, 905], [1586, 925], [1592, 912], [1595, 914],
  [1596, 938], [1602, 939], [1606, 930], [1608, 938], [1609, 903], [1611, 912], [1627, 908], [1628, 943], [1632, 948],
  [1634, 939], [1640, 941], [1644, 951],
];

const DailyChart = () => (
  <div className="relative bg-[#666666]">
    <svg className="block h-[355px] w-[320px] text-[11px]" viewBox="1543 635 320 355">
      <defs>
        <clipPath id="daily-price"><rect x="1543" y="635" width="277" height="253" /></clipPath>
        <clipPath id="daily-108"><rect x="1820" y="810" width="43" height="8" /></clipPath>
      </defs>
      {range(1550, 1642, 2).map((x) => {
        const y = valueAt(dailyVolume, x);
        return <rect key={x} x={x} y={y} width="2" height={970 - y} fill="#808080" />;
      })}
      <g clipPath="url(#daily-price)">
        <Candles points={dailyPath} step={2} seed={91} noise={22} tints={['#fff']} body={1} />
      </g>
      <path d="M1680 825.500H1819" stroke="#c8c8c8" strokeDasharray="4 2 1 2" />
      <path d="M1678 863.500H1819" stroke="#c8c8c8" strokeDasharray="4 3" />
      <BoxLabel x={1642} y={817} w={38} fill="#bdbdbd" color="#606060">pHigh</BoxLabel>
      <BoxLabel x={1642} y={855} w={34} fill="#bdbdbd" color="#606060">pLow</BoxLabel>
      <PlotFrame left={1544.5} right={1819.5} top={635} bottom={971.5} />
      <PriceScale x={1824} tick={1820} rows={[['128.00', 657.5], ['124.00', 689.5], ['120.00', 721.5], ['116.00', 753.5], ['112.00', 785.5], ['104.00', 850.5], ['100.00', 882.5], ['500000', 934.5]]} />
      <text x="1824" y="822" clipPath="url(#daily-108)">108.00</text>
      <text x="1824" y="867" fill="#c0c0c0">102.32</text>
      <BoxLabel x={1823} y={818} w={35} fill="#fff" color="#000">107.01</BoxLabel>
      <path d="M1548.500 972v3M1572.500 972v3M1610.500 972v3M1652.500 972v3M1694.500 972v3M1740.500 972v3M1784.500 972v3M1810.500 972v3" stroke="#fff" />
      <BoxLabel x={1544} y={975} w={18}>022</BoxLabel>
      <text x="1572" y="987" textAnchor="middle">4</text>
      <BoxLabel x={1600} y={975} w={20}>Jun</BoxLabel>
      <BoxLabel x={1644} y={975} w={16}>Jul</BoxLabel>
      <BoxLabel x={1682} y={975} w={24}>Aug</BoxLabel>
      <BoxLabel x={1730} y={975} w={21}>Sep</BoxLabel>
      <BoxLabel x={1774} y={975} w={21}>Oct</BoxLabel>
      <text x="1810" y="987" textAnchor="middle">20</text>
      <BoxLabel x={1848} y={975} w={14} fill="#00c000" color="#000">1</BoxLabel>
    </svg>
    <div className="absolute top-0 left-0 flex w-[276px] overflow-hidden pl-1">
      <Tag className="w-[180px]">CLQ22-NYMEX [CV][M]  Daily  #5</Tag>
      <Tag className="mr-px w-[49px] bg-black text-[#909090]">C: 107.01</Tag>
      <Tag className="w-[42px] bg-[#00c800] text-[#3c863c]">Chg: 2.</Tag>
    </div>
  </div>
);

// ---------- QuoteBoard ----------

const quotes = [
  ['GCQ22-COMEX', '13:41:38', '1829.8', '-0.5'],
  ['MGCQ22-COMEX', '13:41:38', '1829.7', '-0.6'],
  ['SIN22-COMEX', '13:41:39', '21.120', '-0.005'],
  ['CLQ22-NYMEX', '13:41:47', '107.01', '2.74'],
  ['MCLQ22-NYMEX', '13:41:48', '107.03', '2.76'],
  ['QMV26-NYMEX', '17:36:31', '0.000', '0.000'],
];

const changeColor = (v) => {
  if (Number(v) < 0) return 'text-[#ff0000]';
  if (Number(v) > 0) return 'text-[#00ff00]';
  return 'text-white';
};

const QuoteBoard = () => (
  <section className="absolute top-[-54px] right-[6px] flex h-[224px] w-[484px] flex-col overflow-hidden rounded-lg border border-[#b0b0b0] bg-white shadow-[0_8px_28px_rgba(0,0,0,0.35)]">
    <header className="flex h-[27px] shrink-0 items-center pr-[15px] pl-1.5 text-[#8c8c8c]">
      <WindowIcon />
      <h2 className="flex-1 pl-1.5">QuoteBoard - L:1</h2>
      <div className="flex gap-8">
        <button aria-label="Minimize"><Minus size={13} strokeWidth={1.5} /></button>
        <button aria-label="Maximize"><Square size={13} strokeWidth={1.8} /></button>
        <button aria-label="Close"><X size={15} strokeWidth={1.5} /></button>
      </div>
    </header>
    <nav className="flex h-6 shrink-0 items-center gap-3.5 pl-1.5 text-[#555]">
      {['File', 'Settings', 'Alerts', 'Symbols'].map((m) => <button key={m}>{m}</button>)}
    </nav>
    <div className="flex min-h-0 flex-1 border-t-2 border-l border-[#696969] bg-[#f0f0f0]">
      <div className="flex flex-col">
        <table className="w-[465px] table-fixed border-collapse text-white">
          <thead>
            <tr className="h-[23px] bg-[#a0a0a0] text-left text-black">
              <th className="w-[120px] border border-white border-t-0 py-0 pl-1 font-normal">Symbol</th>
              <th className="w-[120px] border-b border-white py-0 pl-1 font-normal">LastTime</th>
              <th className="w-[120px] border-b border-white py-0 pl-1 font-normal">Last</th>
              <th className="border-b border-white py-0 pl-1 font-normal">DailyChange</th>
            </tr>
          </thead>
          <tbody>
            {quotes.map(([symbol, time, last, change]) => (
              <tr key={symbol} className="h-[19px] bg-[#808080] text-center leading-[15px]">
                <td className={clsx('border border-white p-0', symbol === 'CLQ22-NYMEX' && 'bg-[#ffa500] outline-1 -outline-offset-1 outline-[#00e000]')}>{symbol}</td>
                <td className="border border-white p-0">{time}</td>
                <td className="border border-white p-0">{last}</td>
                <td className={clsx('border border-white p-0 pl-4', changeColor(change))}>{change}</td>
              </tr>
            ))}
            <tr className="h-[13px] bg-[#808080]">
              {[0, 1, 2, 3].map((i) => <td key={i} className="border border-white p-0" />)}
            </tr>
          </tbody>
        </table>
        <div className="mt-2 ml-4 h-0.5 w-[17px] bg-[#8c8c8c]" />
      </div>
      <div className="flex flex-1 flex-col items-center justify-between pt-4 pb-1">
        <div className="h-[17px] w-0.5 bg-[#8c8c8c]" />
        <svg width="10" height="9" fill="#b0b0b0" className="self-end">
          <path d="M6 0h2v2H6zM3 3h2v2H3zM6 3h2v2H6zM0 6h2v2H0zM3 6h2v2H3zM6 6h2v2H6z" />
        </svg>
      </div>
    </div>
  </section>
);

// ---------- application ----------

const menus = ['File', 'Edit', 'Chart', 'Analysis', 'Tools', 'Spreadsheet', 'Trade', 'Global Settings', 'Window', 'CB', 'CW', 'Help'];

const chartbooks = [
  ['EuropeanMarket', 'w-[95px]'],
  ['Commodities', 'w-[80px]'],
  ['GoldandOil', 'w-[67px]'],
  ['US Equities', 'w-[67px]'],
  ['USTreasuries', 'w-[74px]'],
];

const chartTabs = [
  ['Intraday', 'w-[50px]'],
  ['TPO Daily', 'w-[58px]'],
  ['CLQ22-NYMEX [CV]  Daily  #5 L:1', 'w-[182px]'],
  ['Market Delta', 'w-[74px]'],
  ['One hour intraday', 'w-[104px]'],
  ['Replay 1.00X: CLQ22-NYMEX  #7 L:1', 'w-[196px]'],
  ['Replay 1.00X: CLQ22-NYMEX  #3 L:1', 'w-[196px]'],
];

const TitleBar = () => (
  <header className="bg-white">
    <div className="flex h-6 items-center pr-[18px] pl-1">
      <svg width="13" height="14" viewBox="0 0 13 14">
        <circle cx="6.500" cy="7" r="6.200" fill="#2f7fb8" />
        <path d="M2 3c3-3 6-2 7 0l-2 3 1 3-2 4C3 12 1 9 1 6z" fill="#7ac030" />
        <path d="M4 2c2-1 3 0 4 1" stroke="#e8f4c0" strokeWidth="1.500" fill="none" />
      </svg>
      <h1 className="flex-1 pl-1.5 whitespace-pre">
        Sierra Chart 2403 GoldandOil  SC Data - All Services 2022-06-24  13:41:47 Fri [Sim]  DF:534893  ST:118, 118  DL:11
      </h1>
      <div className="flex items-center gap-[34px] pb-1">
        <button aria-label="Minimize"><Minus size={12} strokeWidth={2} /></button>
        <button aria-label="Restore"><Copy size={11} strokeWidth={2.2} className="-scale-x-100" /></button>
        <button aria-label="Close"><X size={14} strokeWidth={1.6} /></button>
      </div>
    </div>
    <nav className="flex h-[18px] items-center gap-px">
      {menus.map((m) => <button key={m} className="px-[7px]">{m}</button>)}
    </nav>
  </header>
);

const App = () => (
  <div className="flex min-h-screen flex-col overflow-hidden bg-[#f0f0f0] font-['Open_Sans','Noto_Sans',sans-serif] text-[11px] leading-4 text-black">
    <TitleBar />
    <div className="flex flex-col pt-px">
      <Toolbar groups={rowOne}><StatusPanel /></Toolbar>
      <Toolbar groups={rowTwo}><StatusPanel /></Toolbar>
      <div className="pl-1"><Toolbar groups={rowThree} /></div>
    </div>
    <nav className="flex h-[23px]">
      {chartbooks.map(([name, width]) => (
        <button key={name} className={clsx('h-[22px] border-r border-b border-[#a0a0a0]', width, name === 'GoldandOil' && 'bg-[#0078d7] text-white')}>
          {name}
        </button>
      ))}
    </nav>

    <div className="flex flex-1">
      <main className="relative flex-1 border-t-2 border-l-2 border-[#696969] bg-[#ababab]">
        <ChartWindow place="left-[2px] top-[373px] h-[480px] w-[635px]" title="Market Delta  Replay 1.00X: CLQ22-NYMEX[M]  25000 Volume  #6 L:1 | Crude Oil WTI - NYM...">
          <MarketDeltaChart />
          <ChartFooter />
        </ChartWindow>
        <ChartWindow active place="left-[2px] top-[2px] h-[383px] w-[606px]" title="Intraday Replay 1.00X: CLQ22-NYMEX[M]  1 Min   #2 L:1 | Crude Oil WTI - NYMEX (Aug...">
          <IntradayChart />
          <ChartFooter />
        </ChartWindow>
        <ChartWindow place="left-[629px] top-[9px] h-[829px] w-[512px]" title="Replay 1.00X: CLQ22-NYMEX[M]  #7 L:1 | Crude Oil WTI - NYMEX (A...">
          <DomChart />
        </ChartWindow>
        <ChartWindow place="left-[1157px] top-[31px] h-[378px] w-[562px]" title="One hour intraday Replay 1.00X: CLQ22-NYMEX[M]  60 Min  #4 L:1">
          <OneHourChart />
          <ChartFooter />
        </ChartWindow>
        <ChartWindow place="left-[1146px] top-[417px] h-[455px] w-[361px]" title="Replay 1.00X: CLQ22-NYMEX[M]  #3 L:1...">
          <TpoChart />
          <ChartFooter />
        </ChartWindow>
        <ChartWindow place="left-[1532px] top-[433px] h-[414px] w-[338px]" title="CLQ22-NYMEX [CV][M]  Daily  #5 L...">
          <DailyChart />
          <ChartFooter arrows />
        </ChartWindow>
      </main>
      <div className="relative flex w-[19px] flex-col items-center justify-between border-t-2 border-l border-t-[#696969] border-l-white bg-[#f0f0f0] pt-4 pb-1">
        <div className="h-[726px] w-1.5 rounded-full bg-[#858585]" />
        <svg width="9" height="6"><path d="M0 0h9L4.500 6z" fill="#707070" /></svg>
        <QuoteBoard />
      </div>
    </div>

    <nav className="flex h-[25px] gap-px border-t border-white pt-px">
      {chartTabs.map(([name, width], i) => (
        <button
          key={name}
          className={clsx(
            'h-[22px] whitespace-pre border-r border-[#a0a0a0] text-left',
            width,
            i === 0 ? 'border-4 border-[#0078d7] bg-[#ffc400] leading-3 text-white' : 'bg-[#ffc400] pl-[3px]'
          )}
        >
          {name}
        </button>
      ))}
    </nav>
  </div>
);

export default App;
